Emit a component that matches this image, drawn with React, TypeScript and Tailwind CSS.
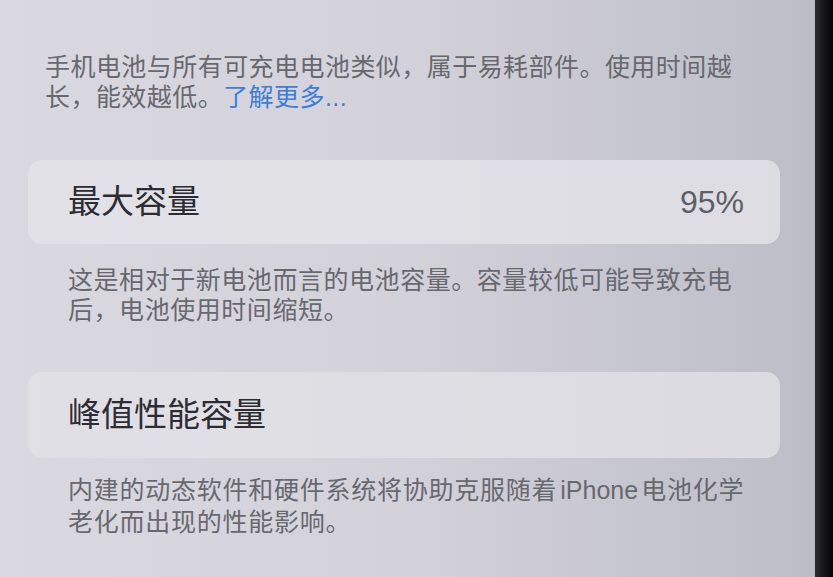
import React from "react";

// Latin metrics first keep the line boxes compact; CJK glyphs come from Noto Sans CJK
const stack = { fontFamily: '"Liberation Sans", "Noto Sans CJK SC", sans-serif' };

function Footnote({ lines, className }: { lines: React.ReactNode[]; className?: string }) {
  return (
    <div className={className}>
      {lines.map((line, i) => (
        <div key={i} className="whitespace-nowrap">
          {line}
        </div>
      ))}
    </div>
  );
}

export default function App() {
  return (
    <div className="flex h-[577px] w-[833px] overflow-hidden" style={stack}>
      <div className="flex-1 bg-gradient-to-r from-[#dad9e1] via-[#d3d2db] to-[#bdbdc8] text-[#68686f]">
        <Footnote
          className="pl-[45px] pt-[52px] text-[25px] leading-[30px] tracking-[0.45px]"
          lines={[
            "手机电池与所有可充电电池类似，属于易耗部件。使用时间越",
            <>
              长，能效越低。<span className="text-[#3d7fd6]">了解更多...</span>
            </>,
          ]}
        />

        <div className="ml-[28px] mt-[48px] flex h-[84px] w-[752px] items-center justify-between rounded-[14px] bg-[#e3e3e8]/80 pl-[40px] pr-[36px]">
          <span className="text-[33px] font-normal text-[#2c2c32]">最大容量</span>
          <span className="text-[32px] text-[#5e5e66]">95%</span>
        </div>

        <Footnote
          className="pl-[68px] pt-[21px] text-[25px] leading-[30px] tracking-[0.55px]"
          lines={["这是相对于新电池而言的电池容量。容量较低可能导致充电", "后，电池使用时间缩短。"]}
        />

        <div className="ml-[28px] mt-[47px] flex h-[86px] w-[752px] items-center rounded-[14px] bg-[#e1e1e6]/80 pl-[40px]">
          <span className="text-[33px] font-normal text-[#2c2c32]">峰值性能容量</span>
        </div>

        <Footnote
          className="pl-[68px] pt-[16px] text-[25px] leading-[32px] tracking-[0.75px]"
          lines={[
            <>
              内建的动态软件和硬件系统将协助克服随着<span className="mx-[3px] tracking-normal">iPhone</span>电池化学
            </>,
            "老化而出现的性能影响。",
          ]}
        />
      </div>
      <div className="w-[18px] bg-gradient-to-r from-[#2a2b30] to-[#050506]" />
    </div>
  );
}
